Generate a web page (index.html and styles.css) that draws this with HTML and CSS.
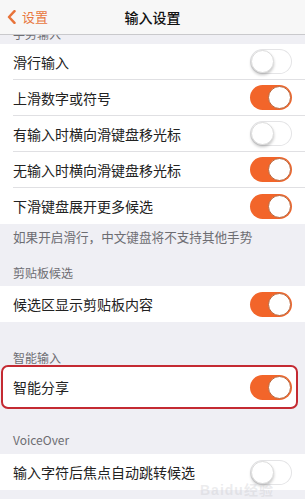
FILE: index.html
```html
<!DOCTYPE html>
<html lang="zh">
<head>
<meta charset="utf-8">
<title>输入设置</title>
<link rel="stylesheet" href="styles.css">
</head>
<body>
<div class="screen">
  <header class="nav">
    <div class="back">
      <svg class="chev" width="9" height="14" viewBox="0 0 9 14"><path d="M7.5 1.2 L2 7 L7.5 12.8" fill="none" stroke="#e8733a" stroke-width="2.5" stroke-linecap="round" stroke-linejoin="round"/></svg>
      <span>设置</span>
    </div>
    <div class="title">输入设置</div>
    <div></div>
  </header>
  <div class="clip"><span>手势输入</span></div>

  <div class="group">
    <div class="row"><div class="row-body"><span>滑行输入</span><span class="switch"><span class="knob"></span></span></div></div>
    <div class="row"><div class="row-body"><span>上滑数字或符号</span><span class="switch on"><span class="knob"></span></span></div></div>
    <div class="row"><div class="row-body"><span>有输入时横向滑键盘移光标</span><span class="switch"><span class="knob"></span></span></div></div>
    <div class="row"><div class="row-body"><span>无输入时横向滑键盘移光标</span><span class="switch on"><span class="knob"></span></span></div></div>
    <div class="row"><div class="row-body"><span>下滑键盘展开更多候选</span><span class="switch on"><span class="knob"></span></span></div></div>
  </div>
  <p class="footer">如果开启滑行，中文键盘将不支持其他手势</p>

  <p class="sec sec-clip">剪贴板候选</p>
  <div class="group">
    <div class="row"><div class="row-body"><span>候选区显示剪贴板内容</span><span class="switch on"><span class="knob"></span></span></div></div>
  </div>

  <p class="sec sec-smart">智能输入</p>
  <div class="group highlight">
    <div class="row"><div class="row-body"><span>智能分享</span><span class="switch on"><span class="knob"></span></span></div></div>
  </div>

  <p class="sec sec-vo">VoiceOver</p>
  <div class="group">
    <div class="row"><div class="row-body"><span>输入字符后焦点自动跳转候选</span><span class="switch"><span class="knob"></span></span></div></div>
  </div>

  <div class="watermark">Baidu经验</div>
</div>
</body>
</html>
```

FILE: styles.css
```css
html, body {
  margin: 0;
  padding: 0;
}
body {
  background: #efeff4;
  font-family: "Noto Sans CJK SC", "Noto Sans", sans-serif;
  color: #222;
}
.screen {
  position: relative;
  width: 305px;
  height: 499px;
  overflow: hidden;
  background: #efeff4;
}
.nav {
  height: 34px;
  border-bottom: 1px solid #c9c9cc;
  background: #f7f7f7;
  display: grid;
  grid-template-columns: 1fr auto 1fr;
  align-items: center;
}
.back {
  display: flex;
  align-items: center;
  gap: 6px;
  padding-left: 7px;
  color: #e8773f;
  font-size: 13px;
  line-height: 14px;
}
.chev {
  display: block;
}
.title {
  font-size: 14px;
  font-weight: 500;
  color: #111;
  line-height: 16px;
}
.clip {
  height: 9px;
  overflow: hidden;
  padding-left: 13px;
  font-size: 12px;
  line-height: 14px;
  color: #6d6d72;
}
.clip span {
  display: block;
  margin-top: -8px;
}
.group {
  background: #fff;
}
.row {
  padding-left: 13px;
}
.row-body {
  height: 36px;
  box-sizing: border-box;
  display: flex;
  align-items: center;
  justify-content: space-between;
  padding-right: 13px;
  border-bottom: 1px solid #e0e0e3;
  font-size: 14px;
  color: #222;
}
.row:last-child .row-body {
  border-bottom: none;
}
.switch {
  width: 42px;
  height: 25px;
  box-sizing: border-box;
  border-radius: 13px;
  background: #fff;
  box-shadow: inset 0 0 0 1px #e4e4e6;
  display: flex;
  align-items: center;
  padding: 1px;
}
.knob {
  width: 23px;
  height: 23px;
  box-sizing: border-box;
  border-radius: 50%;
  background: #fff;
  border: 1px solid #dcdcdc;
  box-shadow: 0 2px 3px rgba(0, 0, 0, 0.22);
}
.switch.on {
  background: #f2652a;
  box-shadow: none;
  justify-content: flex-end;
}
.switch.on .knob {
  border: 1px solid #b8683f;
  box-shadow: none;
}
.footer {
  margin: 0;
  padding: 6px 13px 0;
  font-size: 12.6px;
  line-height: 14px;
  color: #6d6d72;
}
.sec {
  margin: 0;
  padding: 0 13px;
  font-size: 12px;
  line-height: 14px;
  color: #6d6d72;
}
.sec-clip {
  padding-top: 22px;
  padding-bottom: 6px;
}
.sec-smart {
  padding-top: 29px;
  padding-bottom: 0;
}
.sec-vo {
  padding-top: 24px;
  padding-bottom: 7px;
}
.highlight {
  border: 2px solid #c42a32;
  border-radius: 7px;
  margin: 0 7px 0 1px;
  padding: 2px 0;
}
.highlight .row {
  padding-left: 10px;
}
.highlight .row-body {
  padding-right: 4px;
}
.watermark {
  position: absolute;
  left: 200px;
  top: 482px;
  font-family: "Liberation Sans", "Noto Sans CJK SC", sans-serif;
  font-size: 14px;
  line-height: 16px;
  font-weight: bold;
  color: rgba(200, 200, 205, 0.35);
  letter-spacing: 1px;
}
```
